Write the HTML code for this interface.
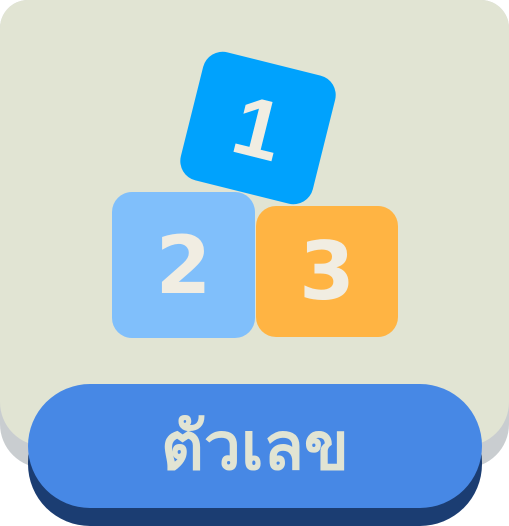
<!DOCTYPE html>
<html><head><meta charset="utf-8"><style>
html,body{margin:0;padding:0;background:#fff;}
body{width:509px;height:526px;position:relative;overflow:hidden;font-family:"Liberation Sans","Noto Sans CJK SC",sans-serif;}
.shadow{position:absolute;left:0;top:0;width:509px;height:468px;background:#c9cdd0;border-radius:28px 28px 44px 44px;}
.card{position:absolute;left:0;top:0;width:509px;height:446px;background:#e1e4d3;border-radius:28px 28px 44px 44px;}
.blk{position:absolute;border-radius:20px;color:#f1ede2;font-weight:bold;font-size:80px;display:flex;align-items:center;justify-content:center;font-family:"DejaVu Sans",sans-serif;}
.btnd{position:absolute;left:28px;top:400px;width:454px;height:126px;background:#1b3d72;border-radius:62px;}
.btn{position:absolute;left:28px;top:384px;width:454px;height:124px;background:#4788e5;border-radius:62px;color:#e1e4d3;font-size:66px;font-weight:bold;text-align:center;line-height:124px;font-family:"Liberation Sans","Noto Sans CJK SC","WenQuanYi Zen Hei",sans-serif;}
</style></head><body>
<div class="shadow"></div>
<div class="card"></div>
<div class="blk" style="left:112px;top:192px;width:143px;height:146px;background:#80bffb;">2</div>
<div class="blk" style="left:256px;top:206px;width:142px;height:131px;background:#ffb443;">3</div>
<div class="blk" style="left:190px;top:62px;width:136px;height:132px;background:#00a2fd;transform:rotate(14deg);font-family:'Liberation Sans',sans-serif;font-size:84px;">1</div>
<div class="btnd"></div>
<div class="btn">ตัวเลข</div>
</body></html>
